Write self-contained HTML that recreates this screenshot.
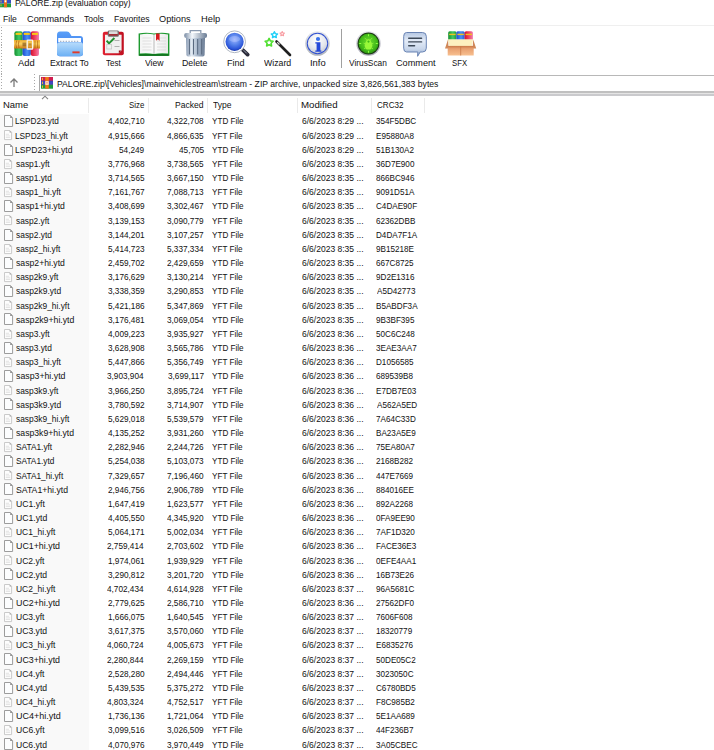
<!DOCTYPE html>
<html><head><meta charset="utf-8"><style>
html,body{margin:0;padding:0;background:#fff;width:714px;height:750px;overflow:hidden;position:relative;font-family:"Liberation Sans",sans-serif;}
.t{position:absolute;white-space:pre;line-height:1;transform-origin:0 0;color:#111}
.lbl{width:80px;text-align:center;font-size:10px;transform:scaleX(.86);transform-origin:50% 0;color:#000}
.namebg{position:absolute;left:0;top:113.8px;width:88.7px;height:640px;background:#f9f9f9}
.fi{position:absolute;left:3.7px;}
</style></head><body>
<div class="namebg"></div>
<svg style="position:absolute;left:0;top:0" width="12" height="8"><rect x="0" y="0" width="11" height="3.6" fill="#3a4fc0"/><rect x="0" y="3.6" width="11" height="3.7" fill="#1f9a3a"/><rect x="4" y="0" width="3" height="7.3" fill="#e8701a"/><rect x="4.6" y="0.3" width="1.8" height="2" fill="#fff"/><rect x="0.5" y="0.5" width="1" height="2" fill="#e8c030"/><rect x="0.5" y="4.3" width="1" height="2" fill="#e8c030"/></svg>
<div style="position:absolute;left:0;top:24.6px;width:714px;height:1.4px;background:#efefef"></div>
<div style="position:absolute;left:0.90px;top:27.00px;width:1.2px;height:1.2px;background:#a8a8a8"></div><div style="position:absolute;left:0.90px;top:29.90px;width:1.2px;height:1.2px;background:#a8a8a8"></div><div style="position:absolute;left:0.90px;top:32.80px;width:1.2px;height:1.2px;background:#a8a8a8"></div><div style="position:absolute;left:0.90px;top:35.70px;width:1.2px;height:1.2px;background:#a8a8a8"></div><div style="position:absolute;left:0.90px;top:38.60px;width:1.2px;height:1.2px;background:#a8a8a8"></div><div style="position:absolute;left:0.90px;top:41.50px;width:1.2px;height:1.2px;background:#a8a8a8"></div><div style="position:absolute;left:0.90px;top:44.40px;width:1.2px;height:1.2px;background:#a8a8a8"></div><div style="position:absolute;left:0.90px;top:47.30px;width:1.2px;height:1.2px;background:#a8a8a8"></div><div style="position:absolute;left:0.90px;top:50.20px;width:1.2px;height:1.2px;background:#a8a8a8"></div><div style="position:absolute;left:0.90px;top:53.10px;width:1.2px;height:1.2px;background:#a8a8a8"></div><div style="position:absolute;left:0.90px;top:56.00px;width:1.2px;height:1.2px;background:#a8a8a8"></div><div style="position:absolute;left:0.90px;top:58.90px;width:1.2px;height:1.2px;background:#a8a8a8"></div><div style="position:absolute;left:0.90px;top:61.80px;width:1.2px;height:1.2px;background:#a8a8a8"></div><div style="position:absolute;left:0.90px;top:64.70px;width:1.2px;height:1.2px;background:#a8a8a8"></div><div style="position:absolute;left:0.90px;top:67.60px;width:1.2px;height:1.2px;background:#a8a8a8"></div><div style="position:absolute;left:0.90px;top:70.50px;width:1.2px;height:1.2px;background:#a8a8a8"></div><div style="position:absolute;left:0.90px;top:73.40px;width:1.2px;height:1.2px;background:#a8a8a8"></div><div style="position:absolute;left:0.90px;top:76.30px;width:1.2px;height:1.2px;background:#a8a8a8"></div><div style="position:absolute;left:0.90px;top:79.20px;width:1.2px;height:1.2px;background:#a8a8a8"></div><div style="position:absolute;left:0.90px;top:82.10px;width:1.2px;height:1.2px;background:#a8a8a8"></div><div style="position:absolute;left:0.90px;top:85.00px;width:1.2px;height:1.2px;background:#a8a8a8"></div><div style="position:absolute;left:0.90px;top:87.90px;width:1.2px;height:1.2px;background:#a8a8a8"></div><div style="position:absolute;left:0.90px;top:90.80px;width:1.2px;height:1.2px;background:#a8a8a8"></div>
<div style="position:absolute;left:33.90px;top:74.00px;width:1.2px;height:1.2px;background:#a8a8a8"></div><div style="position:absolute;left:33.90px;top:76.90px;width:1.2px;height:1.2px;background:#a8a8a8"></div><div style="position:absolute;left:33.90px;top:79.80px;width:1.2px;height:1.2px;background:#a8a8a8"></div><div style="position:absolute;left:33.90px;top:82.70px;width:1.2px;height:1.2px;background:#a8a8a8"></div><div style="position:absolute;left:33.90px;top:85.60px;width:1.2px;height:1.2px;background:#a8a8a8"></div><div style="position:absolute;left:33.90px;top:88.50px;width:1.2px;height:1.2px;background:#a8a8a8"></div><div style="position:absolute;left:33.90px;top:91.40px;width:1.2px;height:1.2px;background:#a8a8a8"></div>
<div style="position:absolute;left:341.1px;top:29.2px;width:1px;height:39px;background:#a0a0a0"></div>
<svg style="position:absolute;left:9px;top:77px" width="10" height="11"><path d="M5 2 L5 10 M1.5 5.5 L5 2 L8.5 5.5" stroke="#7a7a7a" stroke-width="1.3" fill="none"/></svg>
<div style="position:absolute;left:39px;top:74.5px;width:690px;height:16.5px;border-top:1px solid #b8b8b8;border-left:1px solid #a8a8a8;border-bottom:1.5px solid #a8a8a8;border-bottom-left-radius:1.5px;background:#fff"></div>
<svg style="position:absolute;left:41px;top:77px" width="13" height="12"><rect x="0" y="0" width="12" height="3.9" fill="#d01c50"/><rect x="0" y="3.9" width="12" height="3.8" fill="#4048c0"/><rect x="0" y="7.7" width="12" height="4" fill="#1c9c3c"/><rect x="0" y="3.6" width="12" height=".6" fill="#30208a" opacity=".6"/><rect x="0" y="7.4" width="12" height=".6" fill="#201870" opacity=".6"/><rect x="4.2" y="0" width="3.6" height="11.7" fill="#f07818"/><rect x="4.3" y="4.2" width="3.4" height="3.6" fill="#fbeee6"/><rect x="5.2" y="5" width="1.6" height="1.6" fill="#f0a080"/><rect x="1" y="0.8" width="1" height="2.4" fill="#e8b830"/><rect x="1" y="4.6" width="1" height="2.4" fill="#e8b830"/><rect x="1" y="8.5" width="1" height="2.4" fill="#e8b830"/></svg>
<div style="position:absolute;left:0;top:91.4px;width:714px;height:1.8px;background:#c0c0c0"></div>
<div style="position:absolute;left:0;top:93.2px;width:714px;height:0.9px;background:#e4e4e4"></div>
<div style="position:absolute;left:0;top:94.1px;width:714px;height:1.8px;background:#cacacd"></div>
<svg style="position:absolute;left:41px;top:95px" width="8" height="6"><path d="M1 4.2 L4 1.2 L7 4.2" stroke="#808080" stroke-width="1.1" fill="none"/></svg>
<div style="position:absolute;left:88.20px;top:97.6px;width:1px;height:15.7px;background:#eaeaea"></div>
<div style="position:absolute;left:148.00px;top:97.6px;width:1px;height:15.7px;background:#eaeaea"></div>
<div style="position:absolute;left:206.70px;top:97.6px;width:1px;height:15.7px;background:#eaeaea"></div>
<div style="position:absolute;left:296.70px;top:97.6px;width:1px;height:15.7px;background:#eaeaea"></div>
<div style="position:absolute;left:371.30px;top:97.6px;width:1px;height:15.7px;background:#eaeaea"></div>
<div style="position:absolute;left:423.50px;top:97.6px;width:1px;height:15.7px;background:#eaeaea"></div>
<svg style="position:absolute;left:13.5px;top:31px" width="26" height="26" viewBox="0 0 26 26"><defs>
<linearGradient id="gG" x1="0" x2="1"><stop offset="0" stop-color="#14902e"/><stop offset=".55" stop-color="#40c868"/><stop offset="1" stop-color="#1c9a38"/></linearGradient>
<linearGradient id="gB" x1="0" x2="1"><stop offset="0" stop-color="#1c48d0"/><stop offset=".55" stop-color="#4a90f4"/><stop offset="1" stop-color="#2a5cd8"/></linearGradient>
<linearGradient id="gR" x1="0" x2="1"><stop offset="0" stop-color="#d4102e"/><stop offset=".55" stop-color="#f04868"/><stop offset="1" stop-color="#f080b0"/></linearGradient>
<linearGradient id="gO" x1="0" x2="0" y1="0" y2="1"><stop offset="0" stop-color="#f4b030"/><stop offset=".45" stop-color="#f8d060"/><stop offset="1" stop-color="#d07810"/></linearGradient>
</defs>
<rect x="0.4" y="0.2" width="8.3" height="24.9" rx="2" fill="url(#gG)"/>
<rect x="8.6" y="0.2" width="8.3" height="24.9" rx="2" fill="url(#gB)"/>
<rect x="16.8" y="0.2" width="8.2" height="24.9" rx="2" fill="url(#gR)"/>
<rect x="1.6" y="1.9" width="6" height="2" fill="#f8c818"/>
<rect x="9.8" y="1.9" width="6" height="2" fill="#f8c818"/>
<rect x="18" y="1.9" width="6" height="2" fill="#f8c818"/>
<rect x="0" y="9.1" width="26" height="8.4" fill="url(#gO)"/>
<path d="M2.6 9.6 Q1.2 13.3 2.6 17 M5 9.6 Q3.8 13.3 5 17 M21 9.6 v7.4 M23.6 9.6 v7.4" stroke="#a85a08" stroke-width=".8" fill="none" opacity=".8"/>
<rect x="8.5" y="11.6" width="4" height="3.8" fill="#704010" opacity=".55"/>
<rect x="13.2" y="9.2" width="5.4" height="8.8" rx=".6" fill="none" stroke="#f8f4ee" stroke-width="1.3"/>
<rect x="14.5" y="12.3" width="3" height="2.2" fill="#805018" opacity=".5"/>
</svg>
<svg style="position:absolute;left:55.8px;top:31px" width="28" height="26" viewBox="0 0 28 26"><defs>
<linearGradient id="fB" x1="0" x2="0" y1="0" y2="1"><stop offset="0" stop-color="#5aa0f8"/><stop offset="1" stop-color="#2f6ee8"/></linearGradient>
<linearGradient id="fF" x1="0" x2="0" y1="0" y2="1"><stop offset="0" stop-color="#b8dcfc"/><stop offset="1" stop-color="#6cb0f4"/></linearGradient>
</defs>
<path d="M1 4 Q1 0.5 4 0.5 H11 Q13 0.5 14 2.5 L15.5 5 H24 Q27 5 27 8 V22 Q27 25.3 24 25.3 H4 Q1 25.3 1 22 Z" fill="url(#fB)"/>
<rect x="2.2" y="7" width="22.8" height="4" fill="#fbfdff"/>
<path d="M4 10.3 h19" stroke="#a8b4c8" stroke-width="1.2" stroke-dasharray="1.4 1.4"/>
<path d="M1 14 Q1 11.3 3.5 11.3 H24.5 Q27 11.3 27 14 V22 Q27 25.3 24 25.3 H4 Q1 25.3 1 22 Z" fill="url(#fF)"/>
<rect x="16.4" y="20.4" width="7.2" height="1.9" fill="#e03a2a"/>
</svg>
<svg style="position:absolute;left:102px;top:30.2px" width="23" height="26" viewBox="0 0 23 26"><defs>
<linearGradient id="tR" x1="0" x2="1"><stop offset="0" stop-color="#e02030"/><stop offset="1" stop-color="#c01020"/></linearGradient>
</defs>
<rect x="0.8" y="1.8" width="21" height="23.5" rx="2" fill="url(#tR)"/>
<path d="M3 4.8 H19.6 V20.5 L16.8 23.3 H3 Z" fill="#f0f0f0"/>
<path d="M19.6 20.5 L16.8 23.3 V20.5 Z" fill="#901018"/>
<rect x="5.8" y="0.4" width="11" height="6.4" rx="1.2" fill="#707070"/>
<rect x="7" y="1.2" width="8.6" height="2.8" rx="0.6" fill="#dcdcdc"/>
<rect x="7" y="4.2" width="8.6" height="1.4" fill="#b02028"/>
<path d="M4.6 10.6 L7 13.4 L12.4 8" stroke="#209030" stroke-width="2" fill="none"/>
<path d="M12.5 10.5 h5 M12.5 16.5 h5" stroke="#b0b0b0" stroke-width="1"/>
<rect x="4.8" y="14.5" width="4.8" height="4.5" fill="none" stroke="#c8c8c8" stroke-width=".8"/>
</svg>
<svg style="position:absolute;left:138px;top:32.2px" width="32" height="24" viewBox="0 0 32 24"><defs>
<linearGradient id="vP" x1="0" x2="1"><stop offset="0" stop-color="#f4f4f4"/><stop offset=".45" stop-color="#fafafa"/><stop offset=".5" stop-color="#c8c8c8"/><stop offset=".55" stop-color="#fafafa"/><stop offset="1" stop-color="#eaeaea"/></linearGradient>
</defs>
<path d="M0.6 1.5 Q8 0 16 1.5 Q24 0 31.4 1.5 V23.8 H0.6 Z" fill="#1e9a30"/>
<path d="M1.3 23.8 H30.7 V22.3 H1.3 Z" fill="#0c6a18"/>
<path d="M2 2.6 Q9 1 16 2.5 Q23 1 30 2.6 V21.6 Q23 20.6 16 22 Q9 20.6 2 21.6 Z" fill="url(#vP)"/>
<path d="M4.5 6 h9 M4.5 9 h9 M4.5 12 h9 M4.5 15 h9 M4.5 18 h9 M19 9 h9 M19 12 h9 M19 15 h9 M19 18 h9 M22 6 h6" stroke="#d6d6d6" stroke-width=".7"/>
<path d="M18 1.6 H21.6 V8.7 L19.8 7.2 L18 8.7 Z" fill="#d81a20"/>
</svg>
<svg style="position:absolute;left:184px;top:30px" width="24" height="27" viewBox="0 0 24 27"><defs>
<linearGradient id="dB" x1="0" x2="1"><stop offset="0" stop-color="#8a9cb4"/><stop offset=".3" stop-color="#e4ecf4"/><stop offset=".6" stop-color="#a8b8cc"/><stop offset="1" stop-color="#6a7c94"/></linearGradient>
<linearGradient id="dL" x1="0" x2="1"><stop offset="0" stop-color="#7a8ca4"/><stop offset=".35" stop-color="#f4f8fc"/><stop offset="1" stop-color="#6a7c94"/></linearGradient>
</defs>
<path d="M6.2 3 V0.6 H16.8 V3" stroke="#8a9ab0" stroke-width="1.3" fill="none"/>
<rect x="0.2" y="2.9" width="22.8" height="5" rx="2" fill="url(#dL)"/>
<path d="M2 8 H21 L20.6 24.8 Q20.5 26.5 18.8 26.5 H4.2 Q2.5 26.5 2.4 24.8 Z" fill="url(#dB)"/>
<path d="M5.4 9 V24.5 M9.5 9 V24.5 M13.7 9 V24.5 M17.7 9 V24.5" stroke="#5a6a80" stroke-width="1.1"/>
</svg>
<svg style="position:absolute;left:222.5px;top:30.2px" width="27" height="27" viewBox="0 0 27 27"><defs>
<radialGradient id="mG" cx=".5" cy=".38" r=".62"><stop offset="0" stop-color="#a0b4ff"/><stop offset=".45" stop-color="#5a86ec"/><stop offset=".85" stop-color="#2a54d8"/><stop offset="1" stop-color="#1634a8"/></radialGradient>
<linearGradient id="mH" x1="0" x2="1" y1="0" y2="1"><stop offset="0" stop-color="#505060"/><stop offset=".5" stop-color="#a0a4b0"/><stop offset="1" stop-color="#303040"/></linearGradient>
</defs>
<path d="M18.8 19 L24.6 24.6" stroke="#2a2a38" stroke-width="3.8" stroke-linecap="round"/>
<path d="M20.6 20.2 L23.8 23.4" stroke="#9aa0b0" stroke-width="1" />
<circle cx="11.6" cy="11.8" r="10.9" fill="#ffffff" stroke="#a8b0bc" stroke-width=".9"/>
<circle cx="11.6" cy="11.8" r="9.1" fill="url(#mG)"/>
<ellipse cx="11.6" cy="9" rx="5.6" ry="3" fill="#c0d0ff" opacity=".35"/>
</svg>
<svg style="position:absolute;left:262px;top:29.5px" width="30" height="28" viewBox="0 0 30 28"><path d="M14.5 11.5 L28 25" stroke="#202020" stroke-width="2.6" stroke-linecap="round"/>
<path d="M15.2 12.2 L17.5 14.5" stroke="#e0e0e0" stroke-width="1.2"/>
<polygon points="7.10,8.40 8.33,10.90 11.09,11.30 9.10,13.25 9.57,16.00 7.10,14.70 4.63,16.00 5.10,13.25 3.11,11.30 5.87,10.90" fill="none" stroke="#50e030" stroke-width="1.6" stroke-linejoin="round"/><polygon points="12.40,1.70 13.37,3.67 15.54,3.98 13.97,5.51 14.34,7.67 12.40,6.65 10.46,7.67 10.83,5.51 9.26,3.98 11.43,3.67" fill="none" stroke="#20d0f8" stroke-width="1.4" stroke-linejoin="round"/><polygon points="20.20,1.50 20.88,2.87 22.39,3.09 21.29,4.16 21.55,5.66 20.20,4.95 18.85,5.66 19.11,4.16 18.01,3.09 19.52,2.87" fill="none" stroke="#f89aa0" stroke-width="1.1" stroke-linejoin="round"/></svg>
<svg style="position:absolute;left:305.4px;top:30.5px" width="25" height="25" viewBox="0 0 25 25"><defs>
<radialGradient id="iG" cx=".45" cy=".3" r=".75"><stop offset="0" stop-color="#ffffff"/><stop offset=".6" stop-color="#e6e8ee"/><stop offset="1" stop-color="#c4c8d2"/></radialGradient>
<linearGradient id="iR" x1="0" x2="0" y1="0" y2="1"><stop offset="0" stop-color="#e8eaee"/><stop offset="1" stop-color="#b0b4bc"/></linearGradient>
</defs>
<circle cx="12.5" cy="12.5" r="12.3" fill="url(#iR)"/>
<circle cx="12.5" cy="12.5" r="10.7" fill="#3050d0"/>
<circle cx="12.5" cy="12.5" r="9.7" fill="url(#iG)"/>
<circle cx="13" cy="8" r="2.1" fill="#3a72ea"/>
<path d="M10.3 11.2 H15.4 V19.4 H16.4 V20.8 H10.3 V19.4 H11.6 V12.5 H10.3 Z" fill="#2448d8"/>
</svg>
<svg style="position:absolute;left:356px;top:30.5px" width="25" height="25" viewBox="0 0 25 25"><defs>
<radialGradient id="vG" cx=".5" cy=".45" r=".55"><stop offset="0" stop-color="#70e030"/><stop offset=".75" stop-color="#40b818"/><stop offset="1" stop-color="#2a9010"/></radialGradient>
<linearGradient id="vR" x1="0" x2="0" y1="0" y2="1"><stop offset="0" stop-color="#e4e4ea"/><stop offset="1" stop-color="#a8a8b4"/></linearGradient>
</defs>
<circle cx="12.5" cy="12.5" r="12.2" fill="url(#vR)"/>
<circle cx="12.5" cy="12.5" r="10.9" fill="#1c3a14"/>
<circle cx="12.5" cy="12.5" r="10" fill="url(#vG)"/>
<path d="M12.5 3.2 v2 M12.5 19.8 v2 M3.2 12.5 h2 M19.8 12.5 h2" stroke="#90ff40" stroke-width="1.1"/>
<ellipse cx="12.5" cy="14.4" rx="3.8" ry="4.2" fill="#98f838"/>
<circle cx="12.5" cy="10.6" r="2.4" fill="#98f838"/>
<circle cx="12.5" cy="10.6" r="1.1" fill="#40b818"/>
<path d="M8.6 6.8 L10.8 9 M16.4 6.8 L14.2 9 M7.6 12.2 L9.4 12.9 M17.4 12.2 L15.6 12.9 M8.2 18 L9.6 16.2 M16.8 18 L15.4 16.2" stroke="#88e838" stroke-width="1"/>
</svg>
<svg style="position:absolute;left:403.3px;top:31.5px" width="24" height="25" viewBox="0 0 24 25"><defs>
<linearGradient id="cG" x1="0" x2="0" y1="0" y2="1"><stop offset="0" stop-color="#b4c6e2"/><stop offset=".35" stop-color="#e4ecf8"/><stop offset=".7" stop-color="#c8d6ea"/><stop offset="1" stop-color="#8ca4cc"/></linearGradient>
</defs>
<path d="M3.5 0.5 H19.5 Q23.3 0.5 23.3 4.3 V16.2 Q23.3 20 19.5 20 H17.2 L14.6 24.3 L14.8 20 H3.5 Q0.7 20 0.7 16.2 V4.3 Q0.7 0.5 3.5 0.5 Z" fill="url(#cG)" stroke="#6a84b4" stroke-width="1"/>
<path d="M5.7 6.2 H18.6 M5.7 9.9 H18.6 M5.7 13.7 H11.6" stroke="#3c4858" stroke-width="1.4" stroke-linecap="round"/>
</svg>
<svg style="position:absolute;left:444.8px;top:31px" width="32" height="25" viewBox="0 0 32 25"><defs>
<linearGradient id="sBx" x1="0" x2="0" y1="0" y2="1"><stop offset="0" stop-color="#c87848"/><stop offset=".3" stop-color="#e8a070"/><stop offset="1" stop-color="#f8c090"/></linearGradient>
</defs>
<rect x="3.2" y="0.2" width="8.3" height="9.5" rx="1.5" fill="url(#gG)"/>
<rect x="11.4" y="0.2" width="8.3" height="9.5" rx="1.5" fill="url(#gB)"/>
<rect x="19.6" y="0.2" width="8.3" height="9.5" rx="1.5" fill="url(#gR)"/>
<rect x="4.2" y="2.7" width="6.4" height="1.4" fill="#f0c020"/>
<rect x="12.4" y="2.7" width="6.4" height="1.4" fill="#f0c020"/>
<rect x="20.6" y="2.7" width="6.4" height="1.4" fill="#f0c020"/>
<path d="M3 8.3 H28.2 L26.8 15 H4.4 Z" fill="#fdf0c0"/>
<path d="M3 8.6 L0 17.5 H3.6 Z M28.2 8.6 L31.2 17.5 H27.6 Z" fill="#d08858"/>
<rect x="2.7" y="14.9" width="26" height="9.6" fill="url(#sBx)"/>
<path d="M15.7 15 V24.5" stroke="#c87848" stroke-width=".8"/>
</svg>
<div class="t" style="left:15.14px;top:-2.42px;font-size:9.9px;transform:scaleX(0.8722)">PALORE.zip (evaluation copy)</div>
<div class="t" style="left:3.14px;top:13.98px;font-size:9.9px;transform:scaleX(0.8684)">File</div>
<div class="t" style="left:26.53px;top:13.98px;font-size:9.9px;transform:scaleX(0.9307)">Commands</div>
<div class="t" style="left:83.89px;top:13.98px;font-size:9.9px;transform:scaleX(0.8578)">Tools</div>
<div class="t" style="left:113.73px;top:13.98px;font-size:9.9px;transform:scaleX(0.8759)">Favorites</div>
<div class="t" style="left:159.44px;top:13.98px;font-size:9.9px;transform:scaleX(0.9293)">Options</div>
<div class="t" style="left:200.97px;top:13.98px;font-size:9.9px;transform:scaleX(0.9474)">Help</div>
<div class="t" style="left:18.30px;top:57.88px;font-size:9.9px;transform:scaleX(0.9471)">Add</div>
<div class="t" style="left:50.33px;top:57.88px;font-size:9.9px;transform:scaleX(0.8824)">Extract To</div>
<div class="t" style="left:106.20px;top:57.88px;font-size:9.9px;transform:scaleX(0.8112)">Test</div>
<div class="t" style="left:144.69px;top:57.88px;font-size:9.9px;transform:scaleX(0.8757)">View</div>
<div class="t" style="left:182.12px;top:57.88px;font-size:9.9px;transform:scaleX(0.8881)">Delete</div>
<div class="t" style="left:227.20px;top:57.88px;font-size:9.9px;transform:scaleX(0.9127)">Find</div>
<div class="t" style="left:264.19px;top:57.88px;font-size:9.9px;transform:scaleX(0.8867)">Wizard</div>
<div class="t" style="left:310.17px;top:57.88px;font-size:9.9px;transform:scaleX(0.9508)">Info</div>
<div class="t" style="left:349.49px;top:57.88px;font-size:9.9px;transform:scaleX(0.8453)">VirusScan</div>
<div class="t" style="left:395.54px;top:57.88px;font-size:9.9px;transform:scaleX(0.9251)">Comment</div>
<div class="t" style="left:452.11px;top:57.88px;font-size:9.9px;transform:scaleX(0.7838)">SFX</div>
<div class="t" style="left:57.24px;top:78.68px;font-size:9.9px;transform:scaleX(0.8726)">PALORE.zip\[Vehicles]\mainvehiclestream\stream - ZIP archive, unpacked size 3,826,561,383 bytes</div>
<div class="t" style="left:3.06px;top:99.58px;font-size:9.9px;transform:scaleX(0.9592)">Name</div>
<div class="t" style="left:128.90px;top:99.58px;font-size:9.9px;transform:scaleX(0.7945)">Size</div>
<div class="t" style="left:175.14px;top:99.58px;font-size:9.9px;transform:scaleX(0.8667)">Packed</div>
<div class="t" style="left:212.68px;top:99.58px;font-size:9.9px;transform:scaleX(0.8627)">Type</div>
<div class="t" style="left:301.44px;top:99.58px;font-size:9.9px;transform:scaleX(0.9812)">Modified</div>
<div class="t" style="left:376.59px;top:99.58px;font-size:9.9px;transform:scaleX(0.8190)">CRC32</div>
<div class="t" style="left:15.47px;top:116.48px;font-size:9.9px;transform:scaleX(0.8312)">LSPD23.ytd</div>
<div class="t" style="left:107.56px;top:116.48px;font-size:9.9px;transform:scaleX(0.8330)">4,402,710</div>
<div class="t" style="left:167.06px;top:116.48px;font-size:9.9px;transform:scaleX(0.8330)">4,322,708</div>
<div class="t" style="left:212.49px;top:116.48px;font-size:9.9px;transform:scaleX(0.8230)">YTD File</div>
<div class="t" style="left:301.97px;top:116.48px;font-size:9.9px;transform:scaleX(0.8620)">6/6/2023 8:29 ...</div>
<div class="t" style="left:376.39px;top:116.48px;font-size:9.9px;transform:scaleX(0.8230)">354F5DBC</div>
<div class="t" style="left:15.47px;top:130.64px;font-size:9.9px;transform:scaleX(0.8377)">LSPD23_hi.yft</div>
<div class="t" style="left:107.56px;top:130.64px;font-size:9.9px;transform:scaleX(0.8330)">4,915,666</div>
<div class="t" style="left:167.06px;top:130.64px;font-size:9.9px;transform:scaleX(0.8330)">4,866,635</div>
<div class="t" style="left:212.49px;top:130.64px;font-size:9.9px;transform:scaleX(0.8230)">YFT File</div>
<div class="t" style="left:301.97px;top:130.64px;font-size:9.9px;transform:scaleX(0.8620)">6/6/2023 8:29 ...</div>
<div class="t" style="left:375.98px;top:130.64px;font-size:9.9px;transform:scaleX(0.8230)">E95880A8</div>
<div class="t" style="left:15.44px;top:144.81px;font-size:9.9px;transform:scaleX(0.8680)">LSPD23+hi.ytd</div>
<div class="t" style="left:119.01px;top:144.81px;font-size:9.9px;transform:scaleX(0.8330)">54,249</div>
<div class="t" style="left:178.51px;top:144.81px;font-size:9.9px;transform:scaleX(0.8330)">45,705</div>
<div class="t" style="left:212.49px;top:144.81px;font-size:9.9px;transform:scaleX(0.8230)">YTD File</div>
<div class="t" style="left:301.97px;top:144.81px;font-size:9.9px;transform:scaleX(0.8620)">6/6/2023 8:29 ...</div>
<div class="t" style="left:376.39px;top:144.81px;font-size:9.9px;transform:scaleX(0.8230)">51B130A2</div>
<div class="t" style="left:15.99px;top:158.97px;font-size:9.9px;transform:scaleX(0.8522)">sasp1.yft</div>
<div class="t" style="left:107.56px;top:158.97px;font-size:9.9px;transform:scaleX(0.8330)">3,776,968</div>
<div class="t" style="left:167.06px;top:158.97px;font-size:9.9px;transform:scaleX(0.8330)">3,738,565</div>
<div class="t" style="left:212.49px;top:158.97px;font-size:9.9px;transform:scaleX(0.8230)">YFT File</div>
<div class="t" style="left:301.97px;top:158.97px;font-size:9.9px;transform:scaleX(0.8620)">6/6/2023 8:35 ...</div>
<div class="t" style="left:376.39px;top:158.97px;font-size:9.9px;transform:scaleX(0.8230)">36D7E900</div>
<div class="t" style="left:15.99px;top:173.13px;font-size:9.9px;transform:scaleX(0.8482)">sasp1.ytd</div>
<div class="t" style="left:107.56px;top:173.13px;font-size:9.9px;transform:scaleX(0.8330)">3,714,565</div>
<div class="t" style="left:167.06px;top:173.13px;font-size:9.9px;transform:scaleX(0.8330)">3,667,150</div>
<div class="t" style="left:212.49px;top:173.13px;font-size:9.9px;transform:scaleX(0.8230)">YTD File</div>
<div class="t" style="left:301.97px;top:173.13px;font-size:9.9px;transform:scaleX(0.8620)">6/6/2023 8:35 ...</div>
<div class="t" style="left:376.39px;top:173.13px;font-size:9.9px;transform:scaleX(0.8230)">866BC946</div>
<div class="t" style="left:15.99px;top:187.29px;font-size:9.9px;transform:scaleX(0.8524)">sasp1_hi.yft</div>
<div class="t" style="left:107.66px;top:187.29px;font-size:9.9px;transform:scaleX(0.8330)">7,161,767</div>
<div class="t" style="left:167.06px;top:187.29px;font-size:9.9px;transform:scaleX(0.8330)">7,088,713</div>
<div class="t" style="left:212.49px;top:187.29px;font-size:9.9px;transform:scaleX(0.8230)">YFT File</div>
<div class="t" style="left:301.97px;top:187.29px;font-size:9.9px;transform:scaleX(0.8620)">6/6/2023 8:35 ...</div>
<div class="t" style="left:376.29px;top:187.29px;font-size:9.9px;transform:scaleX(0.8230)">9091D51A</div>
<div class="t" style="left:15.98px;top:201.46px;font-size:9.9px;transform:scaleX(0.8779)">sasp1+hi.ytd</div>
<div class="t" style="left:107.56px;top:201.46px;font-size:9.9px;transform:scaleX(0.8330)">3,408,699</div>
<div class="t" style="left:167.16px;top:201.46px;font-size:9.9px;transform:scaleX(0.8330)">3,302,467</div>
<div class="t" style="left:212.49px;top:201.46px;font-size:9.9px;transform:scaleX(0.8230)">YTD File</div>
<div class="t" style="left:301.97px;top:201.46px;font-size:9.9px;transform:scaleX(0.8620)">6/6/2023 8:35 ...</div>
<div class="t" style="left:376.29px;top:201.46px;font-size:9.9px;transform:scaleX(0.8230)">C4DAE90F</div>
<div class="t" style="left:15.99px;top:215.62px;font-size:9.9px;transform:scaleX(0.8444)">sasp2.yft</div>
<div class="t" style="left:107.56px;top:215.62px;font-size:9.9px;transform:scaleX(0.8330)">3,139,153</div>
<div class="t" style="left:167.06px;top:215.62px;font-size:9.9px;transform:scaleX(0.8330)">3,090,779</div>
<div class="t" style="left:212.49px;top:215.62px;font-size:9.9px;transform:scaleX(0.8230)">YFT File</div>
<div class="t" style="left:301.97px;top:215.62px;font-size:9.9px;transform:scaleX(0.8620)">6/6/2023 8:35 ...</div>
<div class="t" style="left:376.29px;top:215.62px;font-size:9.9px;transform:scaleX(0.8230)">62362DBB</div>
<div class="t" style="left:15.99px;top:229.78px;font-size:9.9px;transform:scaleX(0.8511)">sasp2.ytd</div>
<div class="t" style="left:107.66px;top:229.78px;font-size:9.9px;transform:scaleX(0.8330)">3,144,201</div>
<div class="t" style="left:167.16px;top:229.78px;font-size:9.9px;transform:scaleX(0.8330)">3,107,257</div>
<div class="t" style="left:212.49px;top:229.78px;font-size:9.9px;transform:scaleX(0.8230)">YTD File</div>
<div class="t" style="left:301.97px;top:229.78px;font-size:9.9px;transform:scaleX(0.8620)">6/6/2023 8:35 ...</div>
<div class="t" style="left:375.98px;top:229.78px;font-size:9.9px;transform:scaleX(0.8230)">D4DA7F1A</div>
<div class="t" style="left:15.99px;top:243.94px;font-size:9.9px;transform:scaleX(0.8420)">sasp2_hi.yft</div>
<div class="t" style="left:107.56px;top:243.94px;font-size:9.9px;transform:scaleX(0.8330)">5,414,723</div>
<div class="t" style="left:166.96px;top:243.94px;font-size:9.9px;transform:scaleX(0.8330)">5,337,334</div>
<div class="t" style="left:212.49px;top:243.94px;font-size:9.9px;transform:scaleX(0.8230)">YFT File</div>
<div class="t" style="left:301.97px;top:243.94px;font-size:9.9px;transform:scaleX(0.8620)">6/6/2023 8:35 ...</div>
<div class="t" style="left:376.29px;top:243.94px;font-size:9.9px;transform:scaleX(0.8230)">9B15218E</div>
<div class="t" style="left:15.98px;top:258.11px;font-size:9.9px;transform:scaleX(0.8779)">sasp2+hi.ytd</div>
<div class="t" style="left:107.66px;top:258.11px;font-size:9.9px;transform:scaleX(0.8330)">2,459,702</div>
<div class="t" style="left:167.06px;top:258.11px;font-size:9.9px;transform:scaleX(0.8330)">2,429,659</div>
<div class="t" style="left:212.49px;top:258.11px;font-size:9.9px;transform:scaleX(0.8230)">YTD File</div>
<div class="t" style="left:301.97px;top:258.11px;font-size:9.9px;transform:scaleX(0.8620)">6/6/2023 8:35 ...</div>
<div class="t" style="left:376.29px;top:258.11px;font-size:9.9px;transform:scaleX(0.8230)">667C8725</div>
<div class="t" style="left:15.99px;top:272.27px;font-size:9.9px;transform:scaleX(0.8483)">sasp2k9.yft</div>
<div class="t" style="left:107.56px;top:272.27px;font-size:9.9px;transform:scaleX(0.8330)">3,176,629</div>
<div class="t" style="left:166.96px;top:272.27px;font-size:9.9px;transform:scaleX(0.8330)">3,130,214</div>
<div class="t" style="left:212.49px;top:272.27px;font-size:9.9px;transform:scaleX(0.8230)">YFT File</div>
<div class="t" style="left:301.97px;top:272.27px;font-size:9.9px;transform:scaleX(0.8620)">6/6/2023 8:35 ...</div>
<div class="t" style="left:376.29px;top:272.27px;font-size:9.9px;transform:scaleX(0.8230)">9D2E1316</div>
<div class="t" style="left:15.99px;top:286.43px;font-size:9.9px;transform:scaleX(0.8555)">sasp2k9.ytd</div>
<div class="t" style="left:107.56px;top:286.43px;font-size:9.9px;transform:scaleX(0.8330)">3,338,359</div>
<div class="t" style="left:167.06px;top:286.43px;font-size:9.9px;transform:scaleX(0.8330)">3,290,853</div>
<div class="t" style="left:212.49px;top:286.43px;font-size:9.9px;transform:scaleX(0.8230)">YTD File</div>
<div class="t" style="left:301.97px;top:286.43px;font-size:9.9px;transform:scaleX(0.8620)">6/6/2023 8:35 ...</div>
<div class="t" style="left:376.70px;top:286.43px;font-size:9.9px;transform:scaleX(0.8230)">A5D42773</div>
<div class="t" style="left:15.99px;top:300.59px;font-size:9.9px;transform:scaleX(0.8468)">sasp2k9_hi.yft</div>
<div class="t" style="left:107.56px;top:300.59px;font-size:9.9px;transform:scaleX(0.8330)">5,421,186</div>
<div class="t" style="left:167.06px;top:300.59px;font-size:9.9px;transform:scaleX(0.8330)">5,347,869</div>
<div class="t" style="left:212.49px;top:300.59px;font-size:9.9px;transform:scaleX(0.8230)">YFT File</div>
<div class="t" style="left:301.97px;top:300.59px;font-size:9.9px;transform:scaleX(0.8620)">6/6/2023 8:35 ...</div>
<div class="t" style="left:375.98px;top:300.59px;font-size:9.9px;transform:scaleX(0.8230)">B5ABDF3A</div>
<div class="t" style="left:15.98px;top:314.76px;font-size:9.9px;transform:scaleX(0.8826)">sasp2k9+hi.ytd</div>
<div class="t" style="left:107.66px;top:314.76px;font-size:9.9px;transform:scaleX(0.8330)">3,176,481</div>
<div class="t" style="left:166.96px;top:314.76px;font-size:9.9px;transform:scaleX(0.8330)">3,069,054</div>
<div class="t" style="left:212.49px;top:314.76px;font-size:9.9px;transform:scaleX(0.8230)">YTD File</div>
<div class="t" style="left:301.97px;top:314.76px;font-size:9.9px;transform:scaleX(0.8620)">6/6/2023 8:35 ...</div>
<div class="t" style="left:376.29px;top:314.76px;font-size:9.9px;transform:scaleX(0.8230)">9B3BF395</div>
<div class="t" style="left:15.99px;top:328.92px;font-size:9.9px;transform:scaleX(0.8522)">sasp3.yft</div>
<div class="t" style="left:107.56px;top:328.92px;font-size:9.9px;transform:scaleX(0.8330)">4,009,223</div>
<div class="t" style="left:167.16px;top:328.92px;font-size:9.9px;transform:scaleX(0.8330)">3,935,927</div>
<div class="t" style="left:212.49px;top:328.92px;font-size:9.9px;transform:scaleX(0.8230)">YFT File</div>
<div class="t" style="left:301.97px;top:328.92px;font-size:9.9px;transform:scaleX(0.8620)">6/6/2023 8:36 ...</div>
<div class="t" style="left:376.39px;top:328.92px;font-size:9.9px;transform:scaleX(0.8230)">50C6C248</div>
<div class="t" style="left:15.99px;top:343.08px;font-size:9.9px;transform:scaleX(0.8482)">sasp3.ytd</div>
<div class="t" style="left:107.56px;top:343.08px;font-size:9.9px;transform:scaleX(0.8330)">3,628,908</div>
<div class="t" style="left:167.06px;top:343.08px;font-size:9.9px;transform:scaleX(0.8330)">3,565,786</div>
<div class="t" style="left:212.49px;top:343.08px;font-size:9.9px;transform:scaleX(0.8230)">YTD File</div>
<div class="t" style="left:301.97px;top:343.08px;font-size:9.9px;transform:scaleX(0.8620)">6/6/2023 8:36 ...</div>
<div class="t" style="left:376.39px;top:343.08px;font-size:9.9px;transform:scaleX(0.8230)">3EAE3AA7</div>
<div class="t" style="left:15.99px;top:357.24px;font-size:9.9px;transform:scaleX(0.8524)">sasp3_hi.yft</div>
<div class="t" style="left:107.56px;top:357.24px;font-size:9.9px;transform:scaleX(0.8330)">5,447,866</div>
<div class="t" style="left:167.06px;top:357.24px;font-size:9.9px;transform:scaleX(0.8330)">5,356,749</div>
<div class="t" style="left:212.49px;top:357.24px;font-size:9.9px;transform:scaleX(0.8230)">YFT File</div>
<div class="t" style="left:301.97px;top:357.24px;font-size:9.9px;transform:scaleX(0.8620)">6/6/2023 8:36 ...</div>
<div class="t" style="left:375.98px;top:357.24px;font-size:9.9px;transform:scaleX(0.8230)">D1056585</div>
<div class="t" style="left:15.98px;top:371.41px;font-size:9.9px;transform:scaleX(0.8873)">sasp3+hi.ytd</div>
<div class="t" style="left:107.46px;top:371.41px;font-size:9.9px;transform:scaleX(0.8330)">3,903,904</div>
<div class="t" style="left:167.79px;top:371.41px;font-size:9.9px;transform:scaleX(0.8330)">3,699,117</div>
<div class="t" style="left:212.49px;top:371.41px;font-size:9.9px;transform:scaleX(0.8230)">YTD File</div>
<div class="t" style="left:301.97px;top:371.41px;font-size:9.9px;transform:scaleX(0.8620)">6/6/2023 8:36 ...</div>
<div class="t" style="left:376.29px;top:371.41px;font-size:9.9px;transform:scaleX(0.8230)">689539B8</div>
<div class="t" style="left:15.99px;top:385.57px;font-size:9.9px;transform:scaleX(0.8483)">sasp3k9.yft</div>
<div class="t" style="left:107.56px;top:385.57px;font-size:9.9px;transform:scaleX(0.8330)">3,966,250</div>
<div class="t" style="left:166.96px;top:385.57px;font-size:9.9px;transform:scaleX(0.8330)">3,895,724</div>
<div class="t" style="left:212.49px;top:385.57px;font-size:9.9px;transform:scaleX(0.8230)">YFT File</div>
<div class="t" style="left:301.97px;top:385.57px;font-size:9.9px;transform:scaleX(0.8620)">6/6/2023 8:36 ...</div>
<div class="t" style="left:375.98px;top:385.57px;font-size:9.9px;transform:scaleX(0.8230)">E7DB7E03</div>
<div class="t" style="left:15.99px;top:399.73px;font-size:9.9px;transform:scaleX(0.8555)">sasp3k9.ytd</div>
<div class="t" style="left:107.66px;top:399.73px;font-size:9.9px;transform:scaleX(0.8330)">3,780,592</div>
<div class="t" style="left:167.16px;top:399.73px;font-size:9.9px;transform:scaleX(0.8330)">3,714,907</div>
<div class="t" style="left:212.49px;top:399.73px;font-size:9.9px;transform:scaleX(0.8230)">YTD File</div>
<div class="t" style="left:301.97px;top:399.73px;font-size:9.9px;transform:scaleX(0.8620)">6/6/2023 8:36 ...</div>
<div class="t" style="left:376.70px;top:399.73px;font-size:9.9px;transform:scaleX(0.8230)">A562A5ED</div>
<div class="t" style="left:15.99px;top:413.89px;font-size:9.9px;transform:scaleX(0.8455)">sasp3k9_hi.yft</div>
<div class="t" style="left:107.56px;top:413.89px;font-size:9.9px;transform:scaleX(0.8330)">5,629,018</div>
<div class="t" style="left:167.06px;top:413.89px;font-size:9.9px;transform:scaleX(0.8330)">5,539,579</div>
<div class="t" style="left:212.49px;top:413.89px;font-size:9.9px;transform:scaleX(0.8230)">YFT File</div>
<div class="t" style="left:301.97px;top:413.89px;font-size:9.9px;transform:scaleX(0.8620)">6/6/2023 8:36 ...</div>
<div class="t" style="left:376.29px;top:413.89px;font-size:9.9px;transform:scaleX(0.8230)">7A64C33D</div>
<div class="t" style="left:15.98px;top:428.06px;font-size:9.9px;transform:scaleX(0.8772)">sasp3k9+hi.ytd</div>
<div class="t" style="left:107.66px;top:428.06px;font-size:9.9px;transform:scaleX(0.8330)">4,135,252</div>
<div class="t" style="left:167.06px;top:428.06px;font-size:9.9px;transform:scaleX(0.8330)">3,931,260</div>
<div class="t" style="left:212.49px;top:428.06px;font-size:9.9px;transform:scaleX(0.8230)">YTD File</div>
<div class="t" style="left:301.97px;top:428.06px;font-size:9.9px;transform:scaleX(0.8620)">6/6/2023 8:36 ...</div>
<div class="t" style="left:375.98px;top:428.06px;font-size:9.9px;transform:scaleX(0.8230)">BA23A5E9</div>
<div class="t" style="left:15.78px;top:442.22px;font-size:9.9px;transform:scaleX(0.8412)">SATA1.yft</div>
<div class="t" style="left:107.56px;top:442.22px;font-size:9.9px;transform:scaleX(0.8330)">2,282,946</div>
<div class="t" style="left:167.06px;top:442.22px;font-size:9.9px;transform:scaleX(0.8330)">2,244,726</div>
<div class="t" style="left:212.49px;top:442.22px;font-size:9.9px;transform:scaleX(0.8230)">YFT File</div>
<div class="t" style="left:301.97px;top:442.22px;font-size:9.9px;transform:scaleX(0.8620)">6/6/2023 8:36 ...</div>
<div class="t" style="left:376.29px;top:442.22px;font-size:9.9px;transform:scaleX(0.8230)">75EA80A7</div>
<div class="t" style="left:15.78px;top:456.38px;font-size:9.9px;transform:scaleX(0.8380)">SATA1.ytd</div>
<div class="t" style="left:107.56px;top:456.38px;font-size:9.9px;transform:scaleX(0.8330)">5,254,038</div>
<div class="t" style="left:167.06px;top:456.38px;font-size:9.9px;transform:scaleX(0.8330)">5,103,073</div>
<div class="t" style="left:212.49px;top:456.38px;font-size:9.9px;transform:scaleX(0.8230)">YTD File</div>
<div class="t" style="left:301.97px;top:456.38px;font-size:9.9px;transform:scaleX(0.8620)">6/6/2023 8:36 ...</div>
<div class="t" style="left:376.29px;top:456.38px;font-size:9.9px;transform:scaleX(0.8230)">2168B282</div>
<div class="t" style="left:15.78px;top:470.54px;font-size:9.9px;transform:scaleX(0.8404)">SATA1_hi.yft</div>
<div class="t" style="left:107.66px;top:470.54px;font-size:9.9px;transform:scaleX(0.8330)">7,329,657</div>
<div class="t" style="left:167.06px;top:470.54px;font-size:9.9px;transform:scaleX(0.8330)">7,196,460</div>
<div class="t" style="left:212.49px;top:470.54px;font-size:9.9px;transform:scaleX(0.8230)">YFT File</div>
<div class="t" style="left:301.97px;top:470.54px;font-size:9.9px;transform:scaleX(0.8620)">6/6/2023 8:36 ...</div>
<div class="t" style="left:376.49px;top:470.54px;font-size:9.9px;transform:scaleX(0.8230)">447E7669</div>
<div class="t" style="left:15.76px;top:484.71px;font-size:9.9px;transform:scaleX(0.8791)">SATA1+hi.ytd</div>
<div class="t" style="left:107.56px;top:484.71px;font-size:9.9px;transform:scaleX(0.8330)">2,946,756</div>
<div class="t" style="left:167.06px;top:484.71px;font-size:9.9px;transform:scaleX(0.8330)">2,906,789</div>
<div class="t" style="left:212.49px;top:484.71px;font-size:9.9px;transform:scaleX(0.8230)">YTD File</div>
<div class="t" style="left:301.97px;top:484.71px;font-size:9.9px;transform:scaleX(0.8620)">6/6/2023 8:36 ...</div>
<div class="t" style="left:376.39px;top:484.71px;font-size:9.9px;transform:scaleX(0.8230)">884016EE</div>
<div class="t" style="left:15.54px;top:498.87px;font-size:9.9px;transform:scaleX(0.8763)">UC1.yft</div>
<div class="t" style="left:107.56px;top:498.87px;font-size:9.9px;transform:scaleX(0.8330)">1,647,419</div>
<div class="t" style="left:167.16px;top:498.87px;font-size:9.9px;transform:scaleX(0.8330)">1,623,577</div>
<div class="t" style="left:212.49px;top:498.87px;font-size:9.9px;transform:scaleX(0.8230)">YFT File</div>
<div class="t" style="left:301.97px;top:498.87px;font-size:9.9px;transform:scaleX(0.8620)">6/6/2023 8:36 ...</div>
<div class="t" style="left:376.39px;top:498.87px;font-size:9.9px;transform:scaleX(0.8230)">892A2268</div>
<div class="t" style="left:15.54px;top:513.03px;font-size:9.9px;transform:scaleX(0.8756)">UC1.ytd</div>
<div class="t" style="left:107.56px;top:513.03px;font-size:9.9px;transform:scaleX(0.8330)">4,405,550</div>
<div class="t" style="left:167.06px;top:513.03px;font-size:9.9px;transform:scaleX(0.8330)">4,345,920</div>
<div class="t" style="left:212.49px;top:513.03px;font-size:9.9px;transform:scaleX(0.8230)">YTD File</div>
<div class="t" style="left:301.97px;top:513.03px;font-size:9.9px;transform:scaleX(0.8620)">6/6/2023 8:36 ...</div>
<div class="t" style="left:376.39px;top:513.03px;font-size:9.9px;transform:scaleX(0.8230)">0FA9EE90</div>
<div class="t" style="left:15.56px;top:527.19px;font-size:9.9px;transform:scaleX(0.8553)">UC1_hi.yft</div>
<div class="t" style="left:107.66px;top:527.19px;font-size:9.9px;transform:scaleX(0.8330)">5,064,171</div>
<div class="t" style="left:166.96px;top:527.19px;font-size:9.9px;transform:scaleX(0.8330)">5,002,034</div>
<div class="t" style="left:212.49px;top:527.19px;font-size:9.9px;transform:scaleX(0.8230)">YFT File</div>
<div class="t" style="left:301.97px;top:527.19px;font-size:9.9px;transform:scaleX(0.8620)">6/6/2023 8:36 ...</div>
<div class="t" style="left:376.29px;top:527.19px;font-size:9.9px;transform:scaleX(0.8230)">7AF1D320</div>
<div class="t" style="left:15.53px;top:541.36px;font-size:9.9px;transform:scaleX(0.8958)">UC1+hi.ytd</div>
<div class="t" style="left:107.46px;top:541.36px;font-size:9.9px;transform:scaleX(0.8330)">2,759,414</div>
<div class="t" style="left:167.16px;top:541.36px;font-size:9.9px;transform:scaleX(0.8330)">2,703,602</div>
<div class="t" style="left:212.49px;top:541.36px;font-size:9.9px;transform:scaleX(0.8230)">YTD File</div>
<div class="t" style="left:301.97px;top:541.36px;font-size:9.9px;transform:scaleX(0.8620)">6/6/2023 8:36 ...</div>
<div class="t" style="left:375.98px;top:541.36px;font-size:9.9px;transform:scaleX(0.8230)">FACE36E3</div>
<div class="t" style="left:15.55px;top:555.52px;font-size:9.9px;transform:scaleX(0.8637)">UC2.yft</div>
<div class="t" style="left:107.66px;top:555.52px;font-size:9.9px;transform:scaleX(0.8330)">1,974,061</div>
<div class="t" style="left:167.06px;top:555.52px;font-size:9.9px;transform:scaleX(0.8330)">1,939,929</div>
<div class="t" style="left:212.49px;top:555.52px;font-size:9.9px;transform:scaleX(0.8230)">YFT File</div>
<div class="t" style="left:301.97px;top:555.52px;font-size:9.9px;transform:scaleX(0.8620)">6/6/2023 8:36 ...</div>
<div class="t" style="left:376.39px;top:555.52px;font-size:9.9px;transform:scaleX(0.8230)">0EFE4AA1</div>
<div class="t" style="left:15.55px;top:569.68px;font-size:9.9px;transform:scaleX(0.8705)">UC2.ytd</div>
<div class="t" style="left:107.66px;top:569.68px;font-size:9.9px;transform:scaleX(0.8330)">3,290,812</div>
<div class="t" style="left:167.06px;top:569.68px;font-size:9.9px;transform:scaleX(0.8330)">3,201,720</div>
<div class="t" style="left:212.49px;top:569.68px;font-size:9.9px;transform:scaleX(0.8230)">YTD File</div>
<div class="t" style="left:301.97px;top:569.68px;font-size:9.9px;transform:scaleX(0.8620)">6/6/2023 8:36 ...</div>
<div class="t" style="left:376.08px;top:569.68px;font-size:9.9px;transform:scaleX(0.8230)">16B73E26</div>
<div class="t" style="left:15.56px;top:583.84px;font-size:9.9px;transform:scaleX(0.8553)">UC2_hi.yft</div>
<div class="t" style="left:107.46px;top:583.84px;font-size:9.9px;transform:scaleX(0.8330)">4,702,434</div>
<div class="t" style="left:167.06px;top:583.84px;font-size:9.9px;transform:scaleX(0.8330)">4,614,928</div>
<div class="t" style="left:212.49px;top:583.84px;font-size:9.9px;transform:scaleX(0.8230)">YFT File</div>
<div class="t" style="left:301.97px;top:583.84px;font-size:9.9px;transform:scaleX(0.8620)">6/6/2023 8:37 ...</div>
<div class="t" style="left:376.29px;top:583.84px;font-size:9.9px;transform:scaleX(0.8230)">96A5681C</div>
<div class="t" style="left:15.53px;top:598.01px;font-size:9.9px;transform:scaleX(0.8958)">UC2+hi.ytd</div>
<div class="t" style="left:107.56px;top:598.01px;font-size:9.9px;transform:scaleX(0.8330)">2,779,625</div>
<div class="t" style="left:167.06px;top:598.01px;font-size:9.9px;transform:scaleX(0.8330)">2,586,710</div>
<div class="t" style="left:212.49px;top:598.01px;font-size:9.9px;transform:scaleX(0.8230)">YTD File</div>
<div class="t" style="left:301.97px;top:598.01px;font-size:9.9px;transform:scaleX(0.8620)">6/6/2023 8:36 ...</div>
<div class="t" style="left:376.29px;top:598.01px;font-size:9.9px;transform:scaleX(0.8230)">27562DF0</div>
<div class="t" style="left:15.55px;top:612.17px;font-size:9.9px;transform:scaleX(0.8637)">UC3.yft</div>
<div class="t" style="left:107.56px;top:612.17px;font-size:9.9px;transform:scaleX(0.8330)">1,666,075</div>
<div class="t" style="left:167.06px;top:612.17px;font-size:9.9px;transform:scaleX(0.8330)">1,640,545</div>
<div class="t" style="left:212.49px;top:612.17px;font-size:9.9px;transform:scaleX(0.8230)">YFT File</div>
<div class="t" style="left:301.97px;top:612.17px;font-size:9.9px;transform:scaleX(0.8620)">6/6/2023 8:37 ...</div>
<div class="t" style="left:376.29px;top:612.17px;font-size:9.9px;transform:scaleX(0.8230)">7606F608</div>
<div class="t" style="left:15.55px;top:626.33px;font-size:9.9px;transform:scaleX(0.8705)">UC3.ytd</div>
<div class="t" style="left:107.56px;top:626.33px;font-size:9.9px;transform:scaleX(0.8330)">3,617,375</div>
<div class="t" style="left:167.06px;top:626.33px;font-size:9.9px;transform:scaleX(0.8330)">3,570,060</div>
<div class="t" style="left:212.49px;top:626.33px;font-size:9.9px;transform:scaleX(0.8230)">YTD File</div>
<div class="t" style="left:301.97px;top:626.33px;font-size:9.9px;transform:scaleX(0.8620)">6/6/2023 8:37 ...</div>
<div class="t" style="left:376.08px;top:626.33px;font-size:9.9px;transform:scaleX(0.8230)">18320779</div>
<div class="t" style="left:15.56px;top:640.49px;font-size:9.9px;transform:scaleX(0.8553)">UC3_hi.yft</div>
<div class="t" style="left:107.46px;top:640.49px;font-size:9.9px;transform:scaleX(0.8330)">4,060,724</div>
<div class="t" style="left:167.06px;top:640.49px;font-size:9.9px;transform:scaleX(0.8330)">4,005,673</div>
<div class="t" style="left:212.49px;top:640.49px;font-size:9.9px;transform:scaleX(0.8230)">YFT File</div>
<div class="t" style="left:301.97px;top:640.49px;font-size:9.9px;transform:scaleX(0.8620)">6/6/2023 8:37 ...</div>
<div class="t" style="left:375.98px;top:640.49px;font-size:9.9px;transform:scaleX(0.8230)">E6835276</div>
<div class="t" style="left:15.53px;top:654.66px;font-size:9.9px;transform:scaleX(0.8958)">UC3+hi.ytd</div>
<div class="t" style="left:107.46px;top:654.66px;font-size:9.9px;transform:scaleX(0.8330)">2,280,844</div>
<div class="t" style="left:167.06px;top:654.66px;font-size:9.9px;transform:scaleX(0.8330)">2,269,159</div>
<div class="t" style="left:212.49px;top:654.66px;font-size:9.9px;transform:scaleX(0.8230)">YTD File</div>
<div class="t" style="left:301.97px;top:654.66px;font-size:9.9px;transform:scaleX(0.8620)">6/6/2023 8:37 ...</div>
<div class="t" style="left:376.39px;top:654.66px;font-size:9.9px;transform:scaleX(0.8230)">50DE05C2</div>
<div class="t" style="left:15.55px;top:668.82px;font-size:9.9px;transform:scaleX(0.8637)">UC4.yft</div>
<div class="t" style="left:107.56px;top:668.82px;font-size:9.9px;transform:scaleX(0.8330)">2,528,280</div>
<div class="t" style="left:167.06px;top:668.82px;font-size:9.9px;transform:scaleX(0.8330)">2,494,446</div>
<div class="t" style="left:212.49px;top:668.82px;font-size:9.9px;transform:scaleX(0.8230)">YFT File</div>
<div class="t" style="left:301.97px;top:668.82px;font-size:9.9px;transform:scaleX(0.8620)">6/6/2023 8:37 ...</div>
<div class="t" style="left:376.39px;top:668.82px;font-size:9.9px;transform:scaleX(0.8230)">3023050C</div>
<div class="t" style="left:15.55px;top:682.98px;font-size:9.9px;transform:scaleX(0.8705)">UC4.ytd</div>
<div class="t" style="left:107.56px;top:682.98px;font-size:9.9px;transform:scaleX(0.8330)">5,439,535</div>
<div class="t" style="left:167.16px;top:682.98px;font-size:9.9px;transform:scaleX(0.8330)">5,375,272</div>
<div class="t" style="left:212.49px;top:682.98px;font-size:9.9px;transform:scaleX(0.8230)">YTD File</div>
<div class="t" style="left:301.97px;top:682.98px;font-size:9.9px;transform:scaleX(0.8620)">6/6/2023 8:37 ...</div>
<div class="t" style="left:376.29px;top:682.98px;font-size:9.9px;transform:scaleX(0.8230)">C6780BD5</div>
<div class="t" style="left:15.56px;top:697.14px;font-size:9.9px;transform:scaleX(0.8553)">UC4_hi.yft</div>
<div class="t" style="left:107.46px;top:697.14px;font-size:9.9px;transform:scaleX(0.8330)">4,803,324</div>
<div class="t" style="left:167.16px;top:697.14px;font-size:9.9px;transform:scaleX(0.8330)">4,752,517</div>
<div class="t" style="left:212.49px;top:697.14px;font-size:9.9px;transform:scaleX(0.8230)">YFT File</div>
<div class="t" style="left:301.97px;top:697.14px;font-size:9.9px;transform:scaleX(0.8620)">6/6/2023 8:37 ...</div>
<div class="t" style="left:375.98px;top:697.14px;font-size:9.9px;transform:scaleX(0.8230)">F8C985B2</div>
<div class="t" style="left:15.52px;top:711.31px;font-size:9.9px;transform:scaleX(0.9107)">UC4+hi.ytd</div>
<div class="t" style="left:107.56px;top:711.31px;font-size:9.9px;transform:scaleX(0.8330)">1,736,136</div>
<div class="t" style="left:166.96px;top:711.31px;font-size:9.9px;transform:scaleX(0.8330)">1,721,064</div>
<div class="t" style="left:212.49px;top:711.31px;font-size:9.9px;transform:scaleX(0.8230)">YTD File</div>
<div class="t" style="left:301.97px;top:711.31px;font-size:9.9px;transform:scaleX(0.8620)">6/6/2023 8:37 ...</div>
<div class="t" style="left:376.39px;top:711.31px;font-size:9.9px;transform:scaleX(0.8230)">5E1AA689</div>
<div class="t" style="left:15.55px;top:725.47px;font-size:9.9px;transform:scaleX(0.8700)">UC6.yft</div>
<div class="t" style="left:107.56px;top:725.47px;font-size:9.9px;transform:scaleX(0.8330)">3,099,516</div>
<div class="t" style="left:167.06px;top:725.47px;font-size:9.9px;transform:scaleX(0.8330)">3,026,509</div>
<div class="t" style="left:212.49px;top:725.47px;font-size:9.9px;transform:scaleX(0.8230)">YFT File</div>
<div class="t" style="left:301.97px;top:725.47px;font-size:9.9px;transform:scaleX(0.8620)">6/6/2023 8:37 ...</div>
<div class="t" style="left:376.49px;top:725.47px;font-size:9.9px;transform:scaleX(0.8230)">44F236B7</div>
<div class="t" style="left:15.55px;top:739.63px;font-size:9.9px;transform:scaleX(0.8669)">UC6.ytd</div>
<div class="t" style="left:107.56px;top:739.63px;font-size:9.9px;transform:scaleX(0.8330)">4,070,976</div>
<div class="t" style="left:167.06px;top:739.63px;font-size:9.9px;transform:scaleX(0.8330)">3,970,449</div>
<div class="t" style="left:212.49px;top:739.63px;font-size:9.9px;transform:scaleX(0.8230)">YTD File</div>
<div class="t" style="left:301.97px;top:739.63px;font-size:9.9px;transform:scaleX(0.8620)">6/6/2023 8:37 ...</div>
<div class="t" style="left:376.39px;top:739.63px;font-size:9.9px;transform:scaleX(0.8230)">3A05CBEC</div>
<svg class="fi" style="top:115.20px" width="10" height="13"><path d="M0.5 0.5 H6.4 L8.6 2.7 V11.5 H0.5 Z" fill="#fcfdfe" stroke="#9c9c9c" stroke-width="1"/><path d="M6.2 0.4 L8.7 2.9 H6.2 Z" fill="#8e8e8e"/></svg>
<svg class="fi" style="top:130.46px" width="10" height="12"><path d="M0.5 0.5 H5.8 L7.6 2.3 V9.6 H0.5 Z" fill="#fdfdfd" stroke="#cacaca" stroke-width="1"/><path d="M5.6 0.6 L7.6 2.4 H5.6 Z" fill="#9a9a9a"/><path d="M1.8 4.3 H5 M1.8 5.9 H6.2 M1.8 7.5 H6.2" stroke="#dadada" stroke-width=".7"/></svg>
<svg class="fi" style="top:143.53px" width="10" height="13"><path d="M0.5 0.5 H6.4 L8.6 2.7 V11.5 H0.5 Z" fill="#fcfdfe" stroke="#9c9c9c" stroke-width="1"/><path d="M6.2 0.4 L8.7 2.9 H6.2 Z" fill="#8e8e8e"/></svg>
<svg class="fi" style="top:158.79px" width="10" height="12"><path d="M0.5 0.5 H5.8 L7.6 2.3 V9.6 H0.5 Z" fill="#fdfdfd" stroke="#cacaca" stroke-width="1"/><path d="M5.6 0.6 L7.6 2.4 H5.6 Z" fill="#9a9a9a"/><path d="M1.8 4.3 H5 M1.8 5.9 H6.2 M1.8 7.5 H6.2" stroke="#dadada" stroke-width=".7"/></svg>
<svg class="fi" style="top:171.85px" width="10" height="13"><path d="M0.5 0.5 H6.4 L8.6 2.7 V11.5 H0.5 Z" fill="#fcfdfe" stroke="#9c9c9c" stroke-width="1"/><path d="M6.2 0.4 L8.7 2.9 H6.2 Z" fill="#8e8e8e"/></svg>
<svg class="fi" style="top:187.11px" width="10" height="12"><path d="M0.5 0.5 H5.8 L7.6 2.3 V9.6 H0.5 Z" fill="#fdfdfd" stroke="#cacaca" stroke-width="1"/><path d="M5.6 0.6 L7.6 2.4 H5.6 Z" fill="#9a9a9a"/><path d="M1.8 4.3 H5 M1.8 5.9 H6.2 M1.8 7.5 H6.2" stroke="#dadada" stroke-width=".7"/></svg>
<svg class="fi" style="top:200.17px" width="10" height="13"><path d="M0.5 0.5 H6.4 L8.6 2.7 V11.5 H0.5 Z" fill="#fcfdfe" stroke="#9c9c9c" stroke-width="1"/><path d="M6.2 0.4 L8.7 2.9 H6.2 Z" fill="#8e8e8e"/></svg>
<svg class="fi" style="top:215.44px" width="10" height="12"><path d="M0.5 0.5 H5.8 L7.6 2.3 V9.6 H0.5 Z" fill="#fdfdfd" stroke="#cacaca" stroke-width="1"/><path d="M5.6 0.6 L7.6 2.4 H5.6 Z" fill="#9a9a9a"/><path d="M1.8 4.3 H5 M1.8 5.9 H6.2 M1.8 7.5 H6.2" stroke="#dadada" stroke-width=".7"/></svg>
<svg class="fi" style="top:228.50px" width="10" height="13"><path d="M0.5 0.5 H6.4 L8.6 2.7 V11.5 H0.5 Z" fill="#fcfdfe" stroke="#9c9c9c" stroke-width="1"/><path d="M6.2 0.4 L8.7 2.9 H6.2 Z" fill="#8e8e8e"/></svg>
<svg class="fi" style="top:243.76px" width="10" height="12"><path d="M0.5 0.5 H5.8 L7.6 2.3 V9.6 H0.5 Z" fill="#fdfdfd" stroke="#cacaca" stroke-width="1"/><path d="M5.6 0.6 L7.6 2.4 H5.6 Z" fill="#9a9a9a"/><path d="M1.8 4.3 H5 M1.8 5.9 H6.2 M1.8 7.5 H6.2" stroke="#dadada" stroke-width=".7"/></svg>
<svg class="fi" style="top:256.82px" width="10" height="13"><path d="M0.5 0.5 H6.4 L8.6 2.7 V11.5 H0.5 Z" fill="#fcfdfe" stroke="#9c9c9c" stroke-width="1"/><path d="M6.2 0.4 L8.7 2.9 H6.2 Z" fill="#8e8e8e"/></svg>
<svg class="fi" style="top:272.09px" width="10" height="12"><path d="M0.5 0.5 H5.8 L7.6 2.3 V9.6 H0.5 Z" fill="#fdfdfd" stroke="#cacaca" stroke-width="1"/><path d="M5.6 0.6 L7.6 2.4 H5.6 Z" fill="#9a9a9a"/><path d="M1.8 4.3 H5 M1.8 5.9 H6.2 M1.8 7.5 H6.2" stroke="#dadada" stroke-width=".7"/></svg>
<svg class="fi" style="top:285.15px" width="10" height="13"><path d="M0.5 0.5 H6.4 L8.6 2.7 V11.5 H0.5 Z" fill="#fcfdfe" stroke="#9c9c9c" stroke-width="1"/><path d="M6.2 0.4 L8.7 2.9 H6.2 Z" fill="#8e8e8e"/></svg>
<svg class="fi" style="top:300.41px" width="10" height="12"><path d="M0.5 0.5 H5.8 L7.6 2.3 V9.6 H0.5 Z" fill="#fdfdfd" stroke="#cacaca" stroke-width="1"/><path d="M5.6 0.6 L7.6 2.4 H5.6 Z" fill="#9a9a9a"/><path d="M1.8 4.3 H5 M1.8 5.9 H6.2 M1.8 7.5 H6.2" stroke="#dadada" stroke-width=".7"/></svg>
<svg class="fi" style="top:313.47px" width="10" height="13"><path d="M0.5 0.5 H6.4 L8.6 2.7 V11.5 H0.5 Z" fill="#fcfdfe" stroke="#9c9c9c" stroke-width="1"/><path d="M6.2 0.4 L8.7 2.9 H6.2 Z" fill="#8e8e8e"/></svg>
<svg class="fi" style="top:328.74px" width="10" height="12"><path d="M0.5 0.5 H5.8 L7.6 2.3 V9.6 H0.5 Z" fill="#fdfdfd" stroke="#cacaca" stroke-width="1"/><path d="M5.6 0.6 L7.6 2.4 H5.6 Z" fill="#9a9a9a"/><path d="M1.8 4.3 H5 M1.8 5.9 H6.2 M1.8 7.5 H6.2" stroke="#dadada" stroke-width=".7"/></svg>
<svg class="fi" style="top:341.80px" width="10" height="13"><path d="M0.5 0.5 H6.4 L8.6 2.7 V11.5 H0.5 Z" fill="#fcfdfe" stroke="#9c9c9c" stroke-width="1"/><path d="M6.2 0.4 L8.7 2.9 H6.2 Z" fill="#8e8e8e"/></svg>
<svg class="fi" style="top:357.06px" width="10" height="12"><path d="M0.5 0.5 H5.8 L7.6 2.3 V9.6 H0.5 Z" fill="#fdfdfd" stroke="#cacaca" stroke-width="1"/><path d="M5.6 0.6 L7.6 2.4 H5.6 Z" fill="#9a9a9a"/><path d="M1.8 4.3 H5 M1.8 5.9 H6.2 M1.8 7.5 H6.2" stroke="#dadada" stroke-width=".7"/></svg>
<svg class="fi" style="top:370.12px" width="10" height="13"><path d="M0.5 0.5 H6.4 L8.6 2.7 V11.5 H0.5 Z" fill="#fcfdfe" stroke="#9c9c9c" stroke-width="1"/><path d="M6.2 0.4 L8.7 2.9 H6.2 Z" fill="#8e8e8e"/></svg>
<svg class="fi" style="top:385.39px" width="10" height="12"><path d="M0.5 0.5 H5.8 L7.6 2.3 V9.6 H0.5 Z" fill="#fdfdfd" stroke="#cacaca" stroke-width="1"/><path d="M5.6 0.6 L7.6 2.4 H5.6 Z" fill="#9a9a9a"/><path d="M1.8 4.3 H5 M1.8 5.9 H6.2 M1.8 7.5 H6.2" stroke="#dadada" stroke-width=".7"/></svg>
<svg class="fi" style="top:398.45px" width="10" height="13"><path d="M0.5 0.5 H6.4 L8.6 2.7 V11.5 H0.5 Z" fill="#fcfdfe" stroke="#9c9c9c" stroke-width="1"/><path d="M6.2 0.4 L8.7 2.9 H6.2 Z" fill="#8e8e8e"/></svg>
<svg class="fi" style="top:413.71px" width="10" height="12"><path d="M0.5 0.5 H5.8 L7.6 2.3 V9.6 H0.5 Z" fill="#fdfdfd" stroke="#cacaca" stroke-width="1"/><path d="M5.6 0.6 L7.6 2.4 H5.6 Z" fill="#9a9a9a"/><path d="M1.8 4.3 H5 M1.8 5.9 H6.2 M1.8 7.5 H6.2" stroke="#dadada" stroke-width=".7"/></svg>
<svg class="fi" style="top:426.77px" width="10" height="13"><path d="M0.5 0.5 H6.4 L8.6 2.7 V11.5 H0.5 Z" fill="#fcfdfe" stroke="#9c9c9c" stroke-width="1"/><path d="M6.2 0.4 L8.7 2.9 H6.2 Z" fill="#8e8e8e"/></svg>
<svg class="fi" style="top:442.04px" width="10" height="12"><path d="M0.5 0.5 H5.8 L7.6 2.3 V9.6 H0.5 Z" fill="#fdfdfd" stroke="#cacaca" stroke-width="1"/><path d="M5.6 0.6 L7.6 2.4 H5.6 Z" fill="#9a9a9a"/><path d="M1.8 4.3 H5 M1.8 5.9 H6.2 M1.8 7.5 H6.2" stroke="#dadada" stroke-width=".7"/></svg>
<svg class="fi" style="top:455.10px" width="10" height="13"><path d="M0.5 0.5 H6.4 L8.6 2.7 V11.5 H0.5 Z" fill="#fcfdfe" stroke="#9c9c9c" stroke-width="1"/><path d="M6.2 0.4 L8.7 2.9 H6.2 Z" fill="#8e8e8e"/></svg>
<svg class="fi" style="top:470.36px" width="10" height="12"><path d="M0.5 0.5 H5.8 L7.6 2.3 V9.6 H0.5 Z" fill="#fdfdfd" stroke="#cacaca" stroke-width="1"/><path d="M5.6 0.6 L7.6 2.4 H5.6 Z" fill="#9a9a9a"/><path d="M1.8 4.3 H5 M1.8 5.9 H6.2 M1.8 7.5 H6.2" stroke="#dadada" stroke-width=".7"/></svg>
<svg class="fi" style="top:483.42px" width="10" height="13"><path d="M0.5 0.5 H6.4 L8.6 2.7 V11.5 H0.5 Z" fill="#fcfdfe" stroke="#9c9c9c" stroke-width="1"/><path d="M6.2 0.4 L8.7 2.9 H6.2 Z" fill="#8e8e8e"/></svg>
<svg class="fi" style="top:498.69px" width="10" height="12"><path d="M0.5 0.5 H5.8 L7.6 2.3 V9.6 H0.5 Z" fill="#fdfdfd" stroke="#cacaca" stroke-width="1"/><path d="M5.6 0.6 L7.6 2.4 H5.6 Z" fill="#9a9a9a"/><path d="M1.8 4.3 H5 M1.8 5.9 H6.2 M1.8 7.5 H6.2" stroke="#dadada" stroke-width=".7"/></svg>
<svg class="fi" style="top:511.75px" width="10" height="13"><path d="M0.5 0.5 H6.4 L8.6 2.7 V11.5 H0.5 Z" fill="#fcfdfe" stroke="#9c9c9c" stroke-width="1"/><path d="M6.2 0.4 L8.7 2.9 H6.2 Z" fill="#8e8e8e"/></svg>
<svg class="fi" style="top:527.01px" width="10" height="12"><path d="M0.5 0.5 H5.8 L7.6 2.3 V9.6 H0.5 Z" fill="#fdfdfd" stroke="#cacaca" stroke-width="1"/><path d="M5.6 0.6 L7.6 2.4 H5.6 Z" fill="#9a9a9a"/><path d="M1.8 4.3 H5 M1.8 5.9 H6.2 M1.8 7.5 H6.2" stroke="#dadada" stroke-width=".7"/></svg>
<svg class="fi" style="top:540.07px" width="10" height="13"><path d="M0.5 0.5 H6.4 L8.6 2.7 V11.5 H0.5 Z" fill="#fcfdfe" stroke="#9c9c9c" stroke-width="1"/><path d="M6.2 0.4 L8.7 2.9 H6.2 Z" fill="#8e8e8e"/></svg>
<svg class="fi" style="top:555.34px" width="10" height="12"><path d="M0.5 0.5 H5.8 L7.6 2.3 V9.6 H0.5 Z" fill="#fdfdfd" stroke="#cacaca" stroke-width="1"/><path d="M5.6 0.6 L7.6 2.4 H5.6 Z" fill="#9a9a9a"/><path d="M1.8 4.3 H5 M1.8 5.9 H6.2 M1.8 7.5 H6.2" stroke="#dadada" stroke-width=".7"/></svg>
<svg class="fi" style="top:568.40px" width="10" height="13"><path d="M0.5 0.5 H6.4 L8.6 2.7 V11.5 H0.5 Z" fill="#fcfdfe" stroke="#9c9c9c" stroke-width="1"/><path d="M6.2 0.4 L8.7 2.9 H6.2 Z" fill="#8e8e8e"/></svg>
<svg class="fi" style="top:583.66px" width="10" height="12"><path d="M0.5 0.5 H5.8 L7.6 2.3 V9.6 H0.5 Z" fill="#fdfdfd" stroke="#cacaca" stroke-width="1"/><path d="M5.6 0.6 L7.6 2.4 H5.6 Z" fill="#9a9a9a"/><path d="M1.8 4.3 H5 M1.8 5.9 H6.2 M1.8 7.5 H6.2" stroke="#dadada" stroke-width=".7"/></svg>
<svg class="fi" style="top:596.72px" width="10" height="13"><path d="M0.5 0.5 H6.4 L8.6 2.7 V11.5 H0.5 Z" fill="#fcfdfe" stroke="#9c9c9c" stroke-width="1"/><path d="M6.2 0.4 L8.7 2.9 H6.2 Z" fill="#8e8e8e"/></svg>
<svg class="fi" style="top:611.99px" width="10" height="12"><path d="M0.5 0.5 H5.8 L7.6 2.3 V9.6 H0.5 Z" fill="#fdfdfd" stroke="#cacaca" stroke-width="1"/><path d="M5.6 0.6 L7.6 2.4 H5.6 Z" fill="#9a9a9a"/><path d="M1.8 4.3 H5 M1.8 5.9 H6.2 M1.8 7.5 H6.2" stroke="#dadada" stroke-width=".7"/></svg>
<svg class="fi" style="top:625.05px" width="10" height="13"><path d="M0.5 0.5 H6.4 L8.6 2.7 V11.5 H0.5 Z" fill="#fcfdfe" stroke="#9c9c9c" stroke-width="1"/><path d="M6.2 0.4 L8.7 2.9 H6.2 Z" fill="#8e8e8e"/></svg>
<svg class="fi" style="top:640.31px" width="10" height="12"><path d="M0.5 0.5 H5.8 L7.6 2.3 V9.6 H0.5 Z" fill="#fdfdfd" stroke="#cacaca" stroke-width="1"/><path d="M5.6 0.6 L7.6 2.4 H5.6 Z" fill="#9a9a9a"/><path d="M1.8 4.3 H5 M1.8 5.9 H6.2 M1.8 7.5 H6.2" stroke="#dadada" stroke-width=".7"/></svg>
<svg class="fi" style="top:653.37px" width="10" height="13"><path d="M0.5 0.5 H6.4 L8.6 2.7 V11.5 H0.5 Z" fill="#fcfdfe" stroke="#9c9c9c" stroke-width="1"/><path d="M6.2 0.4 L8.7 2.9 H6.2 Z" fill="#8e8e8e"/></svg>
<svg class="fi" style="top:668.64px" width="10" height="12"><path d="M0.5 0.5 H5.8 L7.6 2.3 V9.6 H0.5 Z" fill="#fdfdfd" stroke="#cacaca" stroke-width="1"/><path d="M5.6 0.6 L7.6 2.4 H5.6 Z" fill="#9a9a9a"/><path d="M1.8 4.3 H5 M1.8 5.9 H6.2 M1.8 7.5 H6.2" stroke="#dadada" stroke-width=".7"/></svg>
<svg class="fi" style="top:681.70px" width="10" height="13"><path d="M0.5 0.5 H6.4 L8.6 2.7 V11.5 H0.5 Z" fill="#fcfdfe" stroke="#9c9c9c" stroke-width="1"/><path d="M6.2 0.4 L8.7 2.9 H6.2 Z" fill="#8e8e8e"/></svg>
<svg class="fi" style="top:696.96px" width="10" height="12"><path d="M0.5 0.5 H5.8 L7.6 2.3 V9.6 H0.5 Z" fill="#fdfdfd" stroke="#cacaca" stroke-width="1"/><path d="M5.6 0.6 L7.6 2.4 H5.6 Z" fill="#9a9a9a"/><path d="M1.8 4.3 H5 M1.8 5.9 H6.2 M1.8 7.5 H6.2" stroke="#dadada" stroke-width=".7"/></svg>
<svg class="fi" style="top:710.02px" width="10" height="13"><path d="M0.5 0.5 H6.4 L8.6 2.7 V11.5 H0.5 Z" fill="#fcfdfe" stroke="#9c9c9c" stroke-width="1"/><path d="M6.2 0.4 L8.7 2.9 H6.2 Z" fill="#8e8e8e"/></svg>
<svg class="fi" style="top:725.29px" width="10" height="12"><path d="M0.5 0.5 H5.8 L7.6 2.3 V9.6 H0.5 Z" fill="#fdfdfd" stroke="#cacaca" stroke-width="1"/><path d="M5.6 0.6 L7.6 2.4 H5.6 Z" fill="#9a9a9a"/><path d="M1.8 4.3 H5 M1.8 5.9 H6.2 M1.8 7.5 H6.2" stroke="#dadada" stroke-width=".7"/></svg>
<svg class="fi" style="top:738.35px" width="10" height="13"><path d="M0.5 0.5 H6.4 L8.6 2.7 V11.5 H0.5 Z" fill="#fcfdfe" stroke="#9c9c9c" stroke-width="1"/><path d="M6.2 0.4 L8.7 2.9 H6.2 Z" fill="#8e8e8e"/></svg>
</body></html>
